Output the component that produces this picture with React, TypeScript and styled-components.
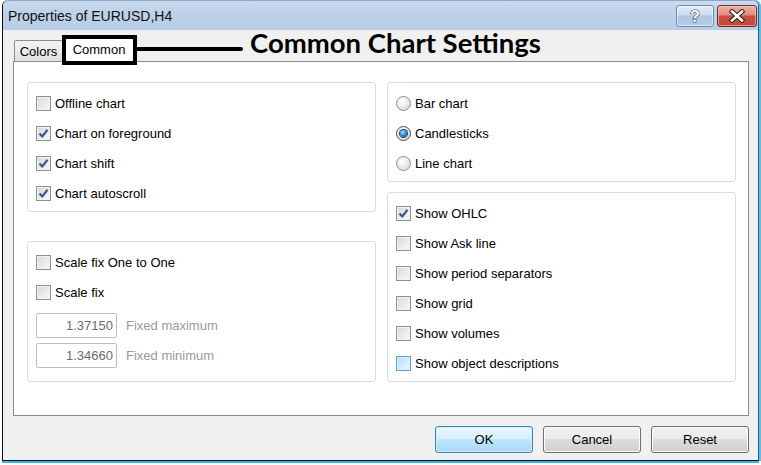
import React from 'react';
import styled, { createGlobalStyle, css } from 'styled-components';

const Global = createGlobalStyle`
  html, body { margin: 0; padding: 0; background: #fff; }
  body { font-family: "Liberation Sans", Arial, sans-serif; }
  * { box-sizing: border-box; }
`;

const Stage = styled.div`
  width: 761px;
  height: 465px;
  overflow: hidden;
  background: #fff;
  padding-left: 2px;
`;

const Window = styled.div`
  position: relative;
  width: 757px;
  height: 461px;
  display: flex;
  flex-direction: column;
  border-left: 1px solid #0d0d0d;
  border-right: 1px solid #2a5f8c;
  border-bottom: 1px solid #0d0d0d;
  border-radius: 6px 6px 0 0;
  box-shadow: 2px 0 0 #63bde9, 0 2px 0 #35b9e4;
  overflow: visible;
`;

const TitleBar = styled.div`
  height: 30px;
  flex: none;
  display: flex;
  align-items: flex-start;
  justify-content: space-between;
  background: linear-gradient(to bottom, #cadbef 0%, #bed1ea 40%, #b9cde7 100%);
  border-radius: 6px 6px 0 0;
  border-top: 1px solid #8fa6c4;
`;

const Title = styled.div`
  font-size: 14px;
  color: #111;
  padding: 7px 0 0 5px;
  line-height: 16px;
`;

const CaptionButtons = styled.div`
  display: flex;
  gap: 3px;
  padding-top: 4px;
  padding-right: 1px;
`;

const CapButton = styled.div<{ $kind: 'help' | 'close' }>`
  height: 22px;
  width: ${p => (p.$kind === 'close' ? 40 : 38)}px;
  border-radius: 3px;
  display: flex;
  align-items: center;
  justify-content: center;
  ${p =>
    p.$kind === 'close'
      ? css`
          border: 1px solid #6d2b24;
          background: linear-gradient(to bottom, #eab0a5 0%, #dd8e80 45%, #c8503f 50%, #c4493a 100%);
          box-shadow: inset 0 0 0 1px rgba(255, 210, 200, 0.55);
        `
      : css`
          border: 1px solid #6e8db5;
          background: linear-gradient(to bottom, #e3ecf8 0%, #cbdbef 45%, #aec5e3 50%, #b5cbe7 100%);
          box-shadow: inset 0 0 0 1px rgba(255, 255, 255, 0.55);
        `}
`;

const Client = styled.div`
  flex: 1;
  background: #f0f0f0;
  display: flex;
  flex-direction: column;
  padding: 0 9px 0 10px;
`;

const TabStrip = styled.div`
  height: 32px;
  flex: none;
  display: flex;
  align-items: flex-end;
  padding-left: 1px;
  margin-bottom: -1px;
  position: relative;
  z-index: 1;
`;

const Tab = styled.div<{ $active?: boolean }>`
  font-size: 13px;
  color: #000;
  display: flex;
  align-items: center;
  justify-content: center;
  border: 1px solid #898c95;
  border-bottom: none;
  border-radius: 2px 2px 0 0;
  ${p =>
    p.$active
      ? css`
          height: 25px;
          width: 74px;
          margin-left: -1px;
          background: #fff;
          padding-bottom: 2px;
        `
      : css`
          height: 21px;
          width: 49px;
          margin-bottom: 1px;
          background: linear-gradient(to bottom, #f3f3f3 0%, #ebebeb 50%, #dedede 100%);
          padding-top: 1px;
        `}
`;

const Panel = styled.div`
  height: 355px;
  flex: none;
  background: #fff;
  border: 1px solid #898c95;
  padding: 20px 12px 0 13px;
  display: flex;
  gap: 11px;
`;

const Column = styled.div<{ $gap: number }>`
  width: 349px;
  display: flex;
  flex-direction: column;
  gap: ${p => p.$gap}px;
`;

const Group = styled.div<{ $h: number }>`
  height: ${p => p.$h}px;
  border: 1px solid #d5dfe5;
  border-radius: 3px;
  padding: 5px 8px 0 8px;
  display: flex;
  flex-direction: column;
`;

const Row = styled.div`
  height: 30px;
  display: flex;
  align-items: center;
  gap: 4px;
  font-size: 13px;
  color: #000;
`;

const Box = styled.span<{ $hover?: boolean }>`
  width: 15px;
  height: 15px;
  flex: none;
  display: inline-flex;
  align-items: center;
  justify-content: center;
  border: 1px solid #8e8f8f;
  background: linear-gradient(135deg, #d6d6d6 0%, #e9e9e9 50%, #f8f8f8 100%);
  box-shadow: inset 0 0 0 1px #f3f3f3;
  ${p =>
    p.$hover &&
    css`
      border-color: #5a9fd0;
      background: linear-gradient(135deg, #b4dcf5 0%, #cfeafa 50%, #eaf7fe 100%);
      box-shadow: inset 0 0 0 1px #def1fc;
    `}
`;

const RadioDot = styled.span<{ $on?: boolean }>`
  width: 15px;
  height: 15px;
  flex: none;
  border-radius: 50%;
  border: 1px solid #8e8f8f;
  background: radial-gradient(circle at 40% 35%, #ffffff 0%, #ececec 45%, #cfcfcf 100%);
  display: inline-flex;
  align-items: center;
  justify-content: center;
  ${p =>
    p.$on &&
    css`
      border-color: #4b4b4b;
      &::after {
        content: '';
        width: 7px;
        height: 7px;
        border-radius: 50%;
        background: radial-gradient(circle at 40% 35%, #b5e6ff 0%, #2d8ee0 45%, #0b3f86 100%);
        box-shadow: 0 0 0 1px #1d3b66;
      }
    `}
`;

const InputRow = styled.div`
  display: flex;
  align-items: center;
  gap: 9px;
  margin-top: 6px;
  & + & {
    margin-top: 5px;
  }
`;

const Field = styled.div`
  width: 81px;
  height: 25px;
  border: 1px solid #bdbdbd;
  border-radius: 2px;
  background: #fff;
  color: #6d6d6d;
  font-size: 13px;
  display: flex;
  align-items: center;
  justify-content: flex-end;
  padding-right: 3px;
`;

const FieldLabel = styled.span`
  font-size: 13px;
  color: #9a9a9a;
`;

const ButtonRow = styled.div`
  display: flex;
  justify-content: flex-end;
  gap: 10px;
  margin-top: 10px;
`;

const Button = styled.div<{ $default?: boolean }>`
  width: 98px;
  height: 27px;
  border-radius: 3px;
  font-size: 13px;
  color: #000;
  display: flex;
  align-items: center;
  justify-content: center;
  border: 1px solid #707070;
  background: linear-gradient(to bottom, #f2f2f2 0%, #ebebeb 49%, #dddddd 50%, #cfcfcf 100%);
  box-shadow: inset 0 0 0 1px #fcfcfc;
  ${p =>
    p.$default &&
    css`
      border-color: #3c7fb1;
      background: linear-gradient(to bottom, #eaf6fd 0%, #d9f0fc 49%, #bee6fd 50%, #a7d9f5 100%);
      box-shadow: inset 0 0 0 1px #d7effb;
    `}
`;

const AnnoBox = styled.div`
  position: absolute;
  left: 59px;
  top: 35px;
  width: 75px;
  height: 30px;
  border: 4px solid #000;
  z-index: 3;
  pointer-events: none;
`;

const AnnoLine = styled.div`
  position: absolute;
  left: 134px;
  top: 47px;
  width: 106px;
  height: 4px;
  background: #000;
  border-radius: 0 2px 2px 0;
  z-index: 3;
`;

const AnnoText = styled.div`
  position: absolute;
  left: 247px;
  top: 28px;
  font-family: Lato, "Open Sans", sans-serif;
  font-weight: 700;
  font-size: 27.5px;
  line-height: 30px;
  color: #000;
  white-space: nowrap;
  z-index: 3;
`;

const Check = () => (
  <svg width="11" height="11" viewBox="0 0 11 11">
    <polyline points="1.5,5.5 4.2,8.5 9.5,1.8" fill="none" stroke="#3d5895" strokeWidth="2.2" strokeLinejoin="round" />
  </svg>
);

const CheckRow = ({ label, checked, hover }: { label: string; checked?: boolean; hover?: boolean }) => (
  <Row>
    <Box $hover={hover}>{checked && <Check />}</Box>
    <span>{label}</span>
  </Row>
);

const RadioRow = ({ label, on }: { label: string; on?: boolean }) => (
  <Row>
    <RadioDot $on={on} />
    <span>{label}</span>
  </Row>
);

export default function App() {
  return (
    <Stage>
      <Global />
      <Window>
        <TitleBar>
          <Title>Properties of EURUSD,H4</Title>
          <CaptionButtons>
            <CapButton $kind="help">
              <svg width="14" height="18" viewBox="0 0 14 18">
                <text
                  x="7"
                  y="15"
                  textAnchor="middle"
                  fontFamily="Liberation Sans, Arial, sans-serif"
                  fontWeight="700"
                  fontSize="16"
                  fill="#fff"
                  stroke="#3a4a63"
                  strokeWidth="1.2"
                  paintOrder="stroke"
                >
                  ?
                </text>
              </svg>
            </CapButton>
            <CapButton $kind="close">
              <svg width="16" height="14" viewBox="0 0 16 14">
                <g strokeLinecap="square">
                  <path d="M3 2.5 L13 11.5 M13 2.5 L3 11.5" stroke="#3b1a16" strokeWidth="4.6" />
                  <path d="M3 2.5 L13 11.5 M13 2.5 L3 11.5" stroke="#fff" strokeWidth="2.6" />
                </g>
              </svg>
            </CapButton>
          </CaptionButtons>
        </TitleBar>
        <Client>
          <TabStrip>
            <Tab>Colors</Tab>
            <Tab $active>Common</Tab>
          </TabStrip>
          <Panel>
            <Column $gap={29}>
              <Group $h={130}>
                <CheckRow label="Offline chart" />
                <CheckRow label="Chart on foreground" checked />
                <CheckRow label="Chart shift" checked />
                <CheckRow label="Chart autoscroll" checked />
              </Group>
              <Group $h={141}>
                <CheckRow label="Scale fix One to One" />
                <CheckRow label="Scale fix" />
                <InputRow>
                  <Field>1.37150</Field>
                  <FieldLabel>Fixed maximum</FieldLabel>
                </InputRow>
                <InputRow>
                  <Field>1.34660</Field>
                  <FieldLabel>Fixed minimum</FieldLabel>
                </InputRow>
              </Group>
            </Column>
            <Column $gap={10}>
              <Group $h={100}>
                <RadioRow label="Bar chart" />
                <RadioRow label="Candlesticks" on />
                <RadioRow label="Line chart" />
              </Group>
              <Group $h={190}>
                <CheckRow label="Show OHLC" checked />
                <CheckRow label="Show Ask line" />
                <CheckRow label="Show period separators" />
                <CheckRow label="Show grid" />
                <CheckRow label="Show volumes" />
                <CheckRow label="Show object descriptions" hover />
              </Group>
            </Column>
          </Panel>
          <ButtonRow>
            <Button $default>OK</Button>
            <Button>Cancel</Button>
            <Button>Reset</Button>
          </ButtonRow>
        </Client>
        <AnnoBox />
        <AnnoLine />
        <AnnoText>Common Chart Settings</AnnoText>
      </Window>
    </Stage>
  );
}
